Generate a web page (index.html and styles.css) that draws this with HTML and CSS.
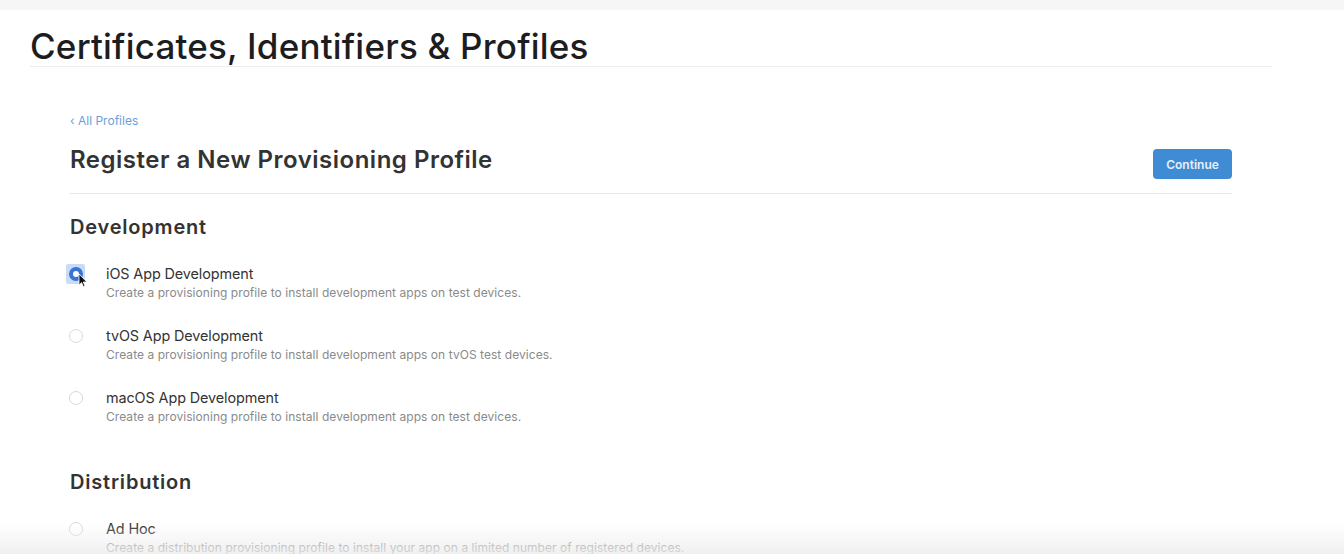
FILE: index.html
```html
<!DOCTYPE html>
<html>
<head>
<meta charset="utf-8">
<link rel="stylesheet" href="styles.css">
</head>
<body>
<div class="topband"></div>
<header class="pagehead">
  <h1 class="apptitle">Certificates, Identifiers &amp; Profiles</h1>
</header>
<main class="content">
  <a class="back" href="#">&lsaquo; All Profiles</a>
  <div class="headrow">
    <h2 class="pagetitle">Register a New Provisioning Profile</h2>
    <button class="continue">Continue</button>
  </div>
  <section class="group">
    <h3 class="grouptitle">Development</h3>
    <div class="option">
      <span class="radiowrap focused">
        <span class="radio checked"></span>
        <svg class="cursor" width="10" height="15" viewBox="0 0 10 15"><path d="M1 1 L1 12 L3.6 9.6 L5.4 13.8 L7 13.1 L5.3 9 L8.8 9 Z" fill="#111" stroke="#fff" stroke-width="0.8"/></svg>
      </span>
      <div class="otext">
        <div class="oname">iOS App Development</div>
        <div class="odesc">Create a provisioning profile to install development apps on test devices.</div>
      </div>
    </div>
    <div class="option">
      <span class="radiowrap"><span class="radio"></span></span>
      <div class="otext">
        <div class="oname">tvOS App Development</div>
        <div class="odesc">Create a provisioning profile to install development apps on tvOS test devices.</div>
      </div>
    </div>
    <div class="option">
      <span class="radiowrap"><span class="radio"></span></span>
      <div class="otext">
        <div class="oname">macOS App Development</div>
        <div class="odesc">Create a provisioning profile to install development apps on test devices.</div>
      </div>
    </div>
  </section>
  <section class="group">
    <h3 class="grouptitle">Distribution</h3>
    <div class="option">
      <span class="radiowrap"><span class="radio"></span></span>
      <div class="otext">
        <div class="oname">Ad Hoc</div>
        <div class="odesc">Create a distribution provisioning profile to install your app on a limited number of registered devices.</div>
      </div>
    </div>
  </section>
</main>
<div class="bottomfade"></div>
</body>
</html>
```
FILE: styles.css
```css
html, body {
  margin: 0;
  padding: 0;
  background: #fff;
  height: 554px;
  overflow: hidden;
}
body {
  font-family: Inter, "Liberation Sans", sans-serif;
  color: #333;
  position: relative;
}
.topband {
  height: 10px;
  background: #f6f6f6;
}
.pagehead {
  margin: 0 72px 0 30px;
  border-bottom: 1px solid #ececec;
  height: 57px;
  box-sizing: border-box;
}
.apptitle {
  margin: 0;
  padding-top: 16px;
  font-size: 35px;
  line-height: 40px;
  font-weight: 500;
  color: #1d1d1f;
  letter-spacing: 0.2px;
}
.content {
  margin: 0 112px 0 70px;
}
.back {
  display: block;
  margin-top: 47px;
  font-size: 12px;
  line-height: 14px;
  color: #6c9fd8;
  text-decoration: none;
}
.headrow {
  display: flex;
  justify-content: space-between;
  align-items: flex-start;
  border-bottom: 1px solid #e6e6e6;
  height: 66px;
  box-sizing: border-box;
  padding-top: 17px;
}
.pagetitle {
  margin: 0;
  font-size: 24px;
  line-height: 30px;
  font-weight: 600;
  color: #333;
  letter-spacing: 0.5px;
}
.continue {
  margin-top: 4px;
  width: 79px;
  height: 30px;
  border: none;
  border-radius: 4px;
  background: #3f8bd4;
  color: #e6f0fb;
  font-family: inherit;
  font-size: 12px;
  font-weight: 600;
  padding: 0;
}
.group {
  display: flex;
  flex-direction: column;
}
.grouptitle {
  margin: 21px 0 26px;
  font-size: 20px;
  line-height: 24px;
  font-weight: 600;
  color: #333;
  letter-spacing: 0.8px;
}
.group + .group .grouptitle {
  margin-top: 19px;
  margin-bottom: 26px;
}
.option {
  display: flex;
  gap: 22px;
  height: 62px;
}
.radiowrap {
  position: relative;
  width: 14px;
  height: 14px;
  margin-top: 2px;
  margin-left: -1px;
  flex: none;
}
.radio {
  display: block;
  box-sizing: border-box;
  width: 14px;
  height: 14px;
  border-radius: 50%;
  border: 1px solid #d9d9d9;
  background: #fff;
}
.radiowrap.focused::before {
  content: "";
  position: absolute;
  left: -3px;
  top: -3px;
  width: 19px;
  height: 20px;
  background: #c9dcf6;
  border-radius: 2px;
}
.radio.checked {
  position: relative;
  border: 4px solid #3a74d6;
  background: #fff;
}
.cursor {
  position: absolute;
  left: 9px;
  top: 6px;
}
.otext {
  display: flex;
  flex-direction: column;
  gap: 3px;
  margin-left: 1px;
}
.oname {
  font-size: 14.4px;
  line-height: 17px;
  color: #333;
  letter-spacing: -0.1px;
}
.odesc {
  font-size: 12px;
  line-height: 15px;
  color: #8a8a8a;
  letter-spacing: 0.05px;
}
.bottomfade {
  position: absolute;
  left: 0;
  right: 0;
  bottom: 0;
  height: 30px;
  background: linear-gradient(to bottom, rgba(240,240,240,0), rgba(236,236,236,0.8));
  pointer-events: none;
}
```
